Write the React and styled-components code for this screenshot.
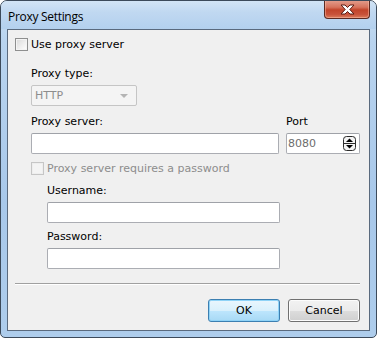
import React from 'react';
import styled, { createGlobalStyle } from 'styled-components';

const GlobalStyle = createGlobalStyle`
    html, body {
        margin: 0;
        padding: 0;
        background: #ffffff;
    }
    body {
        font-family: 'DejaVu Sans', 'Liberation Sans', sans-serif;
        font-size: 11px;
        color: #000;
    }
`;

const App = () => {
    return (
        <>
            <GlobalStyle />
            <Window>
                <TitleBar>
                    <Title>Proxy Settings</Title>
                    <CloseButton>
                        <svg width="17" height="11" viewBox="0 0 17 11">
                            <path d="M2 1 L6 1 L8.5 3.5 L11 1 L15 1 L10.8 5.5 L15 10 L11 10 L8.5 7.5 L6 10 L2 10 L6.2 5.5 Z"
                                fill="#ffffff" stroke="#5a1d14" strokeWidth="1" strokeLinejoin="round" />
                        </svg>
                    </CloseButton>
                </TitleBar>
                <Frame>
                    <Client>
                        <CheckRow>
                            <CheckBox />
                            <span>Use proxy server</span>
                        </CheckRow>

                        <Group>
                            <Label top={16}>Proxy type:</Label>
                            <Select>
                                <span>HTTP</span>
                                <Arrow />
                            </Select>

                            <FieldRow>
                                <Field grow>
                                    <Label top={9}>Proxy server:</Label>
                                    <Input />
                                </Field>
                                <Field width={74}>
                                    <Label top={9}>Port</Label>
                                    <Input>
                                        <DimText>8080</DimText>
                                        <Spinner>
                                            <svg width="13" height="15" viewBox="0 0 13 15">
                                                <rect x="0.5" y="0.5" width="12" height="14" rx="3" fill="#f4f4f4" stroke="#2b2b2b" />
                                                <line x1="1" y1="7.5" x2="12" y2="7.5" stroke="#2b2b2b" />
                                                <path d="M6.5 2.5 L10 6 L3 6 Z" fill="#000" />
                                                <path d="M3 9 L10 9 L6.5 12.5 Z" fill="#000" />
                                            </svg>
                                        </Spinner>
                                    </Input>
                                </Field>
                            </FieldRow>

                            <CheckRow top={8} disabled>
                                <CheckBox disabled />
                                <span>Proxy server requires a password</span>
                            </CheckRow>

                            <Indent>
                                <Label top={9}>Username:</Label>
                                <Input />
                                <Label top={7}>Password:</Label>
                                <Input />
                            </Indent>
                        </Group>

                        <Separator />

                        <Buttons>
                            <Button primary>OK</Button>
                            <Button>Cancel</Button>
                        </Buttons>
                    </Client>
                </Frame>
            </Window>
        </>
    );
};

export default App;

const Window = styled.div`
    width: 377px;
    height: 338px;
    box-sizing: border-box;
    border: 1px solid #3c4a5a;
    border-radius: 7px 7px 5px 5px;
    background: linear-gradient(180deg, #c9dff3 0%, #b9d4ef 12%, #a8c8ea 60%, #aecdec 100%);
    display: flex;
    flex-direction: column;
    overflow: hidden;
`;

const TitleBar = styled.div`
    height: 28px;
    flex-shrink: 0;
    display: flex;
    justify-content: space-between;
    align-items: flex-start;
    background: linear-gradient(180deg, #d2e4f5 0%, #c0d8f1 40%, #b3d0ee 100%);
`;

const Title = styled.div`
    font-family: 'Open Sans', 'DejaVu Sans', sans-serif;
    font-size: 12px;
    letter-spacing: -0.3px;
    color: #000;
    margin: 9px 0 0 7px;
    line-height: 14px;
`;

const CloseButton = styled.div`
    width: 46px;
    height: 19px;
    margin: -1px 6px 0 0;
    box-sizing: border-box;
    border: 1px solid #5c2a22;
    border-top: none;
    border-radius: 0 0 4px 4px;
    background: linear-gradient(180deg, #e4a08f 0%, #d6735d 40%, #c2442a 55%, #c8523a 80%, #dc7c5c 100%);
    box-shadow: inset 0 0 0 1px rgba(255, 200, 180, 0.45);
    display: flex;
    align-items: center;
    justify-content: center;
`;

const Frame = styled.div`
    flex: 1;
    padding: 0 6px 6px 6px;
    display: flex;
`;

const Client = styled.div`
    flex: 1;
    border: 1px solid #5a6a7e;
    background: #f0f0f0;
    padding: 8px 7px 0 7px;
    display: flex;
    flex-direction: column;
`;

const CheckRow = styled.label`
    display: flex;
    align-items: center;
    gap: 3px;
    height: 13px;
    flex-shrink: 0;
    line-height: 13px;
    margin-top: ${p => p.top || 0}px;
    color: ${p => p.disabled ? '#8d8d8d' : '#000'};
`;

const CheckBox = styled.span`
    width: 13px;
    height: 13px;
    box-sizing: border-box;
    border: 1px solid ${p => p.disabled ? '#c6c6c6' : '#8e8f8f'};
    background: ${p => p.disabled
        ? '#f4f4f4'
        : 'linear-gradient(135deg, #d9d9d9 0%, #f0f0f0 60%, #ffffff 100%)'};
    box-shadow: inset 0 0 0 1px ${p => p.disabled ? '#eeeeee' : '#f4f4f4'};
    flex-shrink: 0;
`;

const Group = styled.div`
    padding-left: 16px;
    display: flex;
    flex-direction: column;
`;

const Label = styled.div`
    height: 13px;
    flex-shrink: 0;
    line-height: 13px;
    margin-top: ${p => p.top || 0}px;
    margin-bottom: 5px;
`;

const Select = styled.div`
    width: 106px;
    height: 21px;
    flex-shrink: 0;
    box-sizing: border-box;
    border: 1px solid #c5c5c5;
    border-radius: 2px;
    background: #f4f4f4;
    color: #8d8d8d;
    display: flex;
    align-items: center;
    justify-content: space-between;
    padding: 0 8px 0 3px;
`;

const Arrow = styled.span`
    width: 0;
    height: 0;
    border-left: 4px solid transparent;
    border-right: 4px solid transparent;
    border-top: 4px solid #b4b4b4;
`;

const FieldRow = styled.div`
    display: flex;
    gap: 7px;
    width: 329px;
`;

const Field = styled.div`
    display: flex;
    flex-direction: column;
    ${p => p.grow ? 'flex: 1;' : `width: ${p.width}px;`}
`;

const Input = styled.div`
    height: 21px;
    flex-shrink: 0;
    box-sizing: border-box;
    border: 1px solid #abadb3;
    border-radius: 2px;
    border-top-color: #9fa2a8;
    background: #ffffff;
    display: flex;
    align-items: center;
    justify-content: space-between;
    padding: 0 3px 0 1px;
`;

const DimText = styled.span`
    color: #6d6d6d;
`;

const Spinner = styled.span`
    display: flex;
`;

const Indent = styled.div`
    padding-left: 16px;
    width: 233px;
    display: flex;
    flex-direction: column;
`;

const Separator = styled.div`
    height: 1px;
    flex-shrink: 0;
    background: #a0a0a0;
    border-bottom: 1px solid #ffffff;
    margin-top: 14px;
    width: 345px;
`;

const Buttons = styled.div`
    display: flex;
    justify-content: flex-end;
    gap: 8px;
    margin-top: 14px;
    padding-right: 2px;
`;

const Button = styled.div`
    width: 72px;
    height: 23px;
    box-sizing: border-box;
    border: 1px solid ${p => p.primary ? '#3c7fb1' : '#707070'};
    border-radius: 3px;
    background: ${p => p.primary
        ? 'linear-gradient(180deg, #eaf6fd 0%, #d9f0fc 50%, #bee6fd 51%, #a7d9f5 100%)'
        : 'linear-gradient(180deg, #f2f2f2 0%, #ebebeb 50%, #dddddd 51%, #cfcfcf 100%)'};
    box-shadow: inset 0 0 0 1px ${p => p.primary ? '#8fd3f7' : '#fcfcfc'};
    display: flex;
    align-items: center;
    justify-content: center;
`;
